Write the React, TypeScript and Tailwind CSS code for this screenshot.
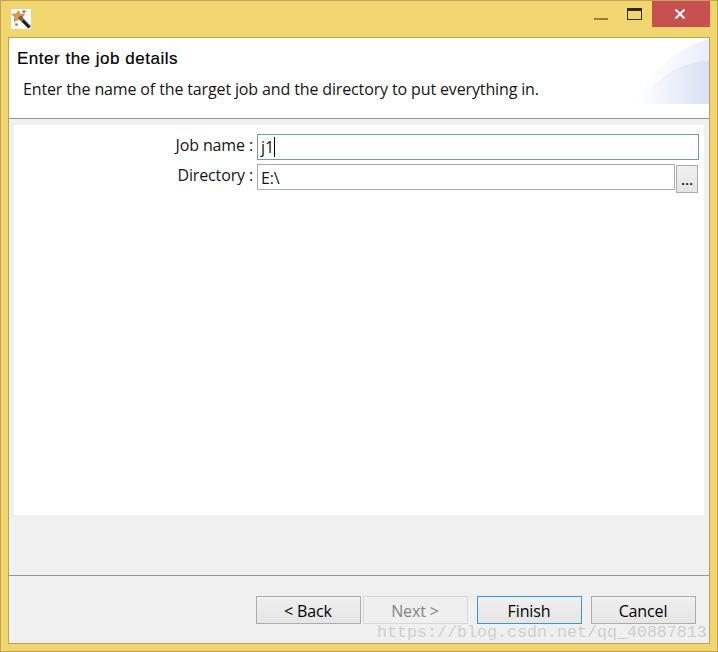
import React from 'react';

function WandIcon() {
  return (
    <svg width="20" height="20" viewBox="0 0 20 20" className="block bg-white">
      <path d="M10 8.5 L19 18" stroke="#aeb4b8" strokeWidth="3.4" />
      <path d="M9.5 9.5 L18.5 18.5" stroke="#17191b" strokeWidth="3" />
      <path d="M7.2 1.8 L9 5.2 L13.5 5.3 L11 8.6 L11.6 12 L7.4 10.2 L3 12.4 L4.2 8.2 L1 5.3 L5.5 5 Z" fill="#e39c40" stroke="#b97a38" strokeWidth=".8" />
      <path d="M7 8 L11 6.8 L11.8 11 L8.5 11 Z" fill="#6b5e57" />
      <path d="M11 1.5h4l-1.2 2.5h-2zM3.8 14.5h3.4l-.7 2.3h-2z" fill="#b77742" />
    </svg>
  );
}

function TitleBar() {
  return (
    <div className="flex h-[36px] shrink-0 items-start">
      <div className="ml-[10px] mt-[8px]"><WandIcon /></div>
      <div className="ml-auto mr-[7px] flex">
        <svg width="58" height="26" viewBox="0 0 58 26" className="block" shapeRendering="crispEdges">
          <rect x="0" y="17" width="14" height="2" fill="#9b7e3e" />
          <path d="M33 7h15v12h-15zM34 10v8h13v-8z" fill="#30270f" fillRule="evenodd" />
        </svg>
        <div className="flex h-[26px] w-[58px] items-center justify-center bg-[#c75050]">
          <svg width="12" height="10" viewBox="0 0 12 10" className="mr-[2px]">
            <path d="M1.5 .5 L10.5 9.5 M10.5 .5 L1.5 9.5" stroke="white" strokeWidth="2" />
          </svg>
        </div>
      </div>
    </div>
  );
}

function Banner() {
  return (
    <svg width="76" height="66" viewBox="0 0 76 66" className="absolute right-0 top-0">
      <defs>
        <linearGradient id="outer"><stop offset="0" stopColor="#fff" /><stop offset=".4" stopColor="#fafbfe" /><stop offset="1" stopColor="#e9eefb" /></linearGradient>
        <linearGradient id="inner"><stop offset="0" stopColor="#fff" /><stop offset="1" stopColor="#d9e1f6" /></linearGradient>
      </defs>
      <path d="M0 66 C18 35 42 10 76 1 V66Z" fill="url(#outer)" />
      <path d="M4 66 C24 41 43 25 76 22 V66Z" fill="url(#inner)" />
    </svg>
  );
}

function Button({ className, children }: { className: string; children: React.ReactNode }) {
  return <button className={`flex h-[28px] w-[105px] items-center justify-center border pr-px pt-px text-[16px] tracking-[-0.13px] ${className}`}>{children}</button>;
}

export default function App() {
  return (
    <div className="relative flex h-[652px] w-[718px] flex-col overflow-hidden border border-[#c0a551] bg-[#f1d66f] font-['Open_Sans','Noto_Sans',sans-serif] text-[16px] leading-5 tracking-[-0.135px] text-[#151515]">
      <TitleBar />
      <div className="mx-[7px] mb-[7px] flex min-h-0 flex-1 flex-col border border-[#b8a257] bg-[#f0f0f0]">
        <header className="relative h-[81px] shrink-0 border-b border-[#969696] bg-white">
          <h1 className="ml-[8px] mt-[11px] w-max whitespace-nowrap font-['Liberation_Sans',sans-serif] text-[17px] leading-5 tracking-[0.51px] text-black [-webkit-text-stroke:0.2px_black]">Enter the job details</h1>
          <p className="ml-[14px] mt-[10px] w-max whitespace-nowrap">Enter the name of the target job and the directory to put everything in.</p>
          <Banner />
        </header>
        <main className="mx-[5px] mt-[6px] h-[390px] shrink-0 bg-white pt-[9px]">
          <div className="flex h-[26px]">
            <label className="w-[239px] pt-px text-right">Job name :</label>
            <div className="ml-[4px] flex w-[442px] items-center border border-[#6a9fbf] pl-[3px]">
              <span>j1</span><span className="h-[20px] w-px bg-black" />
            </div>
          </div>
          <div className="mt-[4px] flex h-[29px]">
            <label className="w-[239px] pt-px text-right">Directory :</label>
            <div className="ml-[4px] flex h-[26px] w-[418px] items-center border border-[#ababab] pl-[3px] pt-px">E:\</div>
            <button className="ml-px mt-px flex h-[28px] w-[22px] items-center justify-center border border-[#acacac] bg-linear-to-b from-[#f0f0f0] to-[#e5e5e5] text-[15px] font-semibold">...</button>
          </div>
        </main>
        <footer className="mt-[60px] flex flex-1 items-start justify-end border-t border-[#969696] pr-[13px] pt-[20px] text-black">
          <Button className="border-[#acacac] bg-linear-to-b from-[#f0f0f0] to-[#e5e5e5]">&lt; Back</Button>
          <Button className="ml-[2px] border-[#d9d9d9] bg-[#efefef] text-[#838383]">Next &gt;</Button>
          <Button className="ml-[9px] border-[#3399dd] bg-linear-to-b from-[#f0f0f0] to-[#e5e5e5]">Finish</Button>
          <Button className="ml-[9px] border-[#acacac] bg-linear-to-b from-[#f0f0f0] to-[#e5e5e5]">Cancel</Button>
        </footer>
      </div>
      <div className="absolute left-[376px] top-[622px] whitespace-nowrap font-['Liberation_Mono',monospace] text-[16.67px] leading-5 tracking-normal text-[#cfcfcf]">https://blog.csdn.net/qq_40887813</div>
    </div>
  );
}
